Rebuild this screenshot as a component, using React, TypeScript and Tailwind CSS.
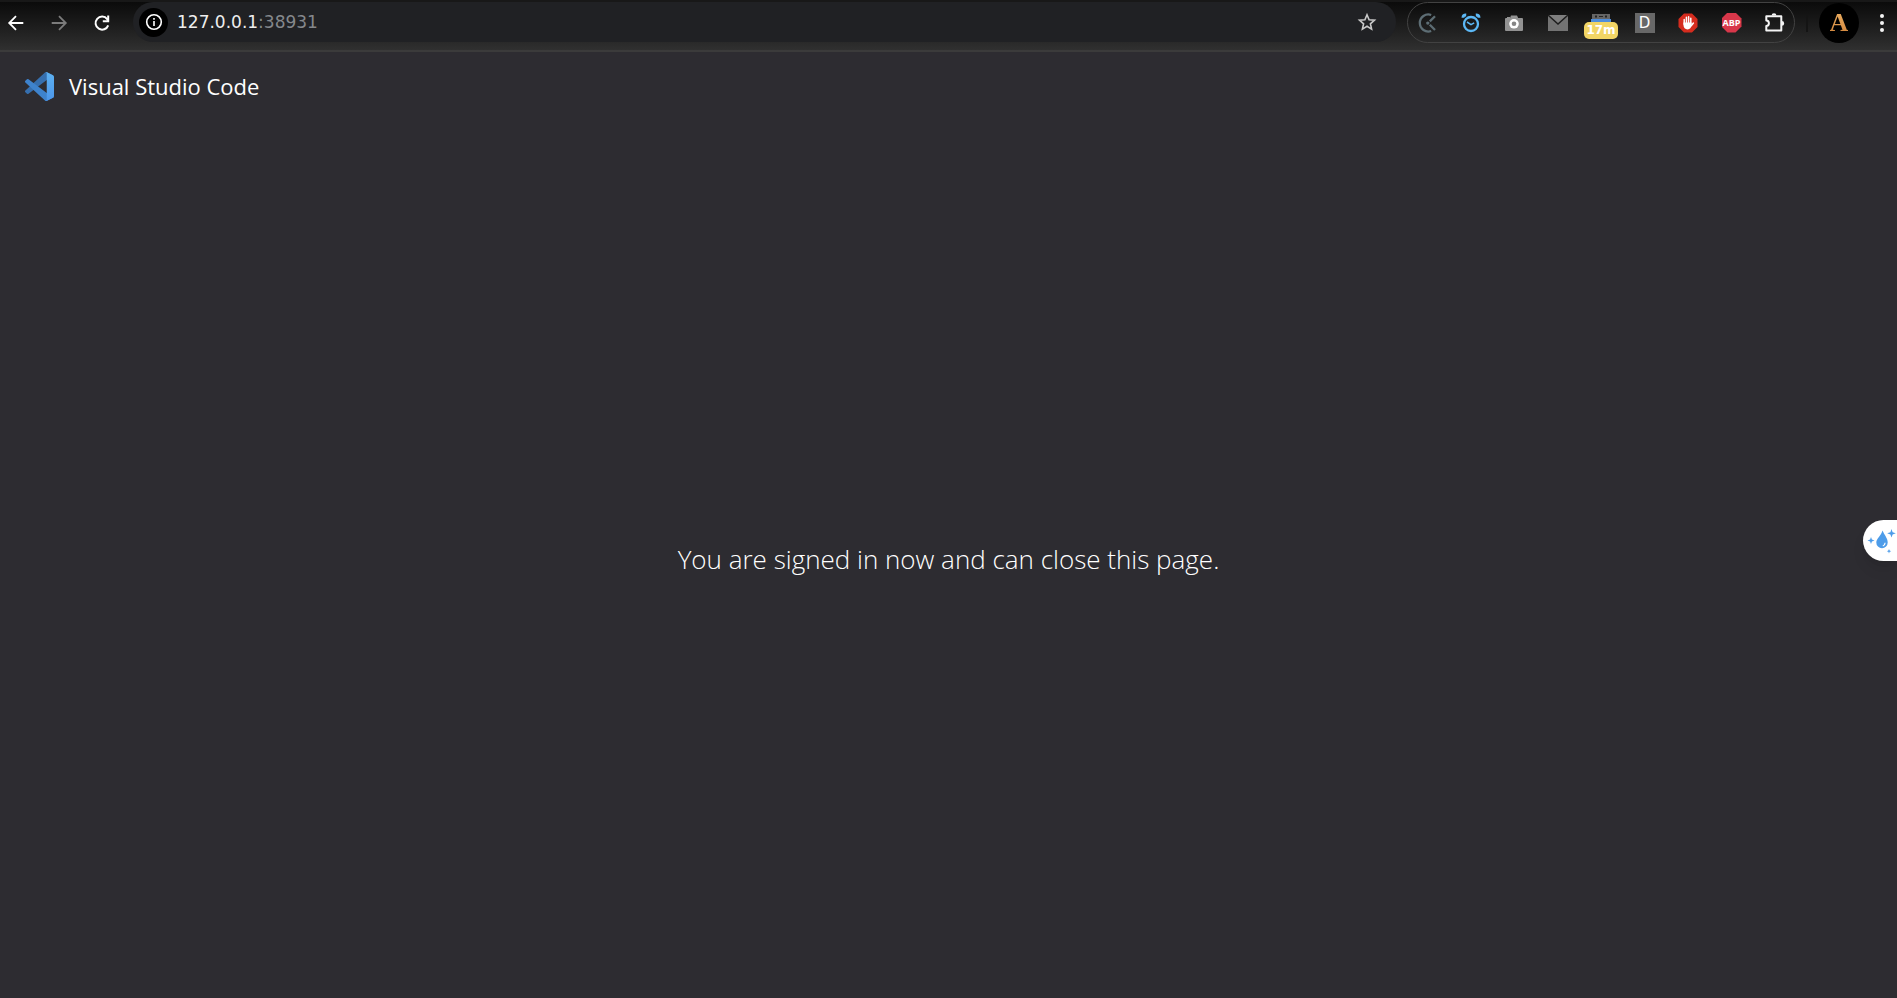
import React from "react";

type ToolButtonProps = {
  label: string;
  className?: string;
  children: React.ReactNode;
};

function ToolButton({ label, className = "justify-center", children }: ToolButtonProps) {
  return (
    <button
      type="button"
      aria-label={label}
      className={`flex shrink-0 items-center ${className}`}
    >
      {children}
    </button>
  );
}

function BackIcon() {
  return (
    <svg width="20" height="20" viewBox="0 0 20 20" fill="none" stroke="currentColor" strokeWidth="1.8">
      <path d="M17.3 10H3.5M10 3.2 3.2 10l6.8 6.8" />
    </svg>
  );
}

function ForwardIcon() {
  return (
    <svg width="20" height="20" viewBox="0 0 20 20" fill="none" stroke="currentColor" strokeWidth="1.8">
      <path d="M2.7 10h13.8M10 3.2l6.8 6.8-6.8 6.8" />
    </svg>
  );
}

function ReloadIcon() {
  return (
    <svg width="20" height="20" viewBox="0 0 20 20" fill="none" stroke="currentColor" strokeWidth="2">
      <path d="M16.2 12.3A6.5 6.5 0 1 1 15.2 6.1L16.4 8" />
      <path d="M16.2 2.6V8.2H10.8" />
    </svg>
  );
}

function InfoIcon() {
  return (
    <svg width="18" height="18" viewBox="0 0 18 18" fill="none" stroke="currentColor" strokeWidth="1.6">
      <circle cx="9" cy="9" r="7.3" />
      <path d="M9 8v5M9 5v1.8" />
    </svg>
  );
}

function StarIcon() {
  return (
    <svg width="20" height="20" viewBox="0 0 20 20" fill="none" stroke="currentColor" strokeWidth="1.6">
      <path d="m10 2.7 2.1 5 5.4.5-4.1 3.6 1.2 5.3-4.6-2.8-4.6 2.8 1.2-5.3-4.1-3.6 5.4-.5z" />
    </svg>
  );
}

function ClickUpIcon() {
  return (
    <svg width="20" height="20" viewBox="0 0 20 20" fill="none" stroke="#5d6d74" strokeWidth="2.3">
      <path d="M14.2 2A8.5 8.5 0 1 0 14.2 18" />
      <path d="m18 3.2-5.2 5.2M12.800 11.800l5.200 5.200" />
      <circle cx="10.8" cy="10.1" r="1.7" fill="#5d6d74" stroke="none" />
    </svg>
  );
}

function AlarmIcon() {
  return (
    <svg width="20" height="20" viewBox="0 0 20 20" fill="none" stroke="#5cb8f6">
      <circle cx="10" cy="11" r="7" strokeWidth="2.3" />
      <path d="m6 9 4 2.6 3.2-1.8" strokeWidth="1.5" />
      <path d="M1.9 4.8C2 2.900 3.200 1.900 5.200 2M18.100 4.800C18 2.900 16.800 1.900 14.800 2" strokeWidth="2.8" />
    </svg>
  );
}

function CameraIcon() {
  return (
    <svg width="20" height="20" viewBox="0 0 20 20" fill="#929292">
      <path d="M2 5h1V4h3v1l1-2.500h6L14.2 5H18a1 1 0 0 1 1 1v11a1 1 0 0 1-1 1H2a1 1 0 0 1-1-1V6a1 1 0 0 1 1-1z" />
      <circle cx="10" cy="10.8" r="4.8" fill="#fff" />
      <circle cx="10" cy="10.8" r="2.3" fill="#858585" />
    </svg>
  );
}

function MailIcon() {
  return (
    <svg width="20" height="18" viewBox="0 0 20 18">
      <path d="M0 1h20v16H0z" fill="#737373" />
      <path d="m0 1 10 9 10-9" fill="#7f7f7f" stroke="#1e1e1e" strokeWidth="1.5" />
    </svg>
  );
}

function RobotIcon() {
  return (
    <svg className="shrink-0" width="20" height="9" viewBox="0 0 20 9">
      <path d="M1 1h18v6H1z" fill="#666" />
      <path d="M4 2.500h2v2H4zM14 2.500h2v2h-2zM8 3h4v1H8z" fill="#252525" />
      <path d="M0 6h20v3H0z" fill="#4f8edb" />
    </svg>
  );
}

function HandIcon() {
  return (
    <svg width="20" height="20" viewBox="0 0 20 20">
      <path d="M6 .5h8L19.5 6v8L14 19.5H6L.5 14V6z" fill="#d52c1e" />
      <path
        d="M6.200 11.200V6.400M8.400 10V4.300M10.600 10V3.800M12.800 10.500V5.200M13.200 12.800l2.200-2.800"
        stroke="#fff"
        strokeWidth="1.5"
        strokeLinecap="round"
      />
      <path d="M5.450 9.500h8.100v3.100c-.4 2.300-1.600 3.800-4 3.800s-4.100-1.600-4.100-4.300z" fill="#fff" />
    </svg>
  );
}

function PuzzleIcon() {
  return (
    <svg width="22" height="22" viewBox="0 0 22 22" fill="none" stroke="#f4f4f4" strokeWidth="2" strokeLinejoin="round">
      <path d="M2.3 4.2h15v14.200h-15v-4.4c3.500-.2 3.500-5.2 0-5.4z" />
      <path d="M7.6 3.600a2.4 2.4 0 0 1 4.8 0zM17.8 9a2.4 2.4 0 0 1 0 4.8z" fill="#f4f4f4" stroke="none" />
    </svg>
  );
}

function DotsIcon() {
  return (
    <svg width="6" height="20" viewBox="0 0 6 20" fill="#f4f4f4">
      <circle cx="3" cy="3" r="2" />
      <circle cx="3" cy="10" r="2" />
      <circle cx="3" cy="17" r="2" />
    </svg>
  );
}

function VSCodeLogo() {
  return (
    <svg width="29" height="29" viewBox="0 0 100 100" aria-hidden="true">
      <defs>
        <linearGradient id="blade" x1="0" y1="0" x2="0" y2="1">
          <stop offset="0" stopColor="#5db1f0" />
          <stop offset="1" stopColor="#4c96ea" />
        </linearGradient>
      </defs>
      <path
        d="M96.5 10.8 75.9.9a6.2 6.2 0 0 0-7.1 1.2L1.3 63.6a4.2 4.2 0 0 0 0 6.2l5.5 5a4.2 4.2 0 0 0 5.4.2L93.3 13.4c2.7-2.1 6.6-.1 6.6 3.3v-.2a6.3 6.3 0 0 0-3.4-5.7z"
        fill="#366fae"
      />
      <path
        d="m96.5 89.2-20.6 9.9a6.2 6.2 0 0 1-7.1-1.2L1.3 36.4a4.2 4.2 0 0 1 0-6.2l5.5-5a4.2 4.2 0 0 1 5.4-.2l81.1 61.6c2.7 2.1 6.6.1 6.6-3.3v.2a6.3 6.3 0 0 1-3.4 5.7z"
        fill="#3e83cd"
      />
      <path
        d="M75.9 99.1a6.2 6.2 0 0 1-7.1-1.2c2.3 2.3 6.2.7 6.2-2.6V4.7c0-3.3-3.9-4.9-6.2-2.6A6.2 6.2 0 0 1 75.9.9l20.6 9.9a6.3 6.3 0 0 1 3.5 5.6v67.2a6.3 6.3 0 0 1-3.5 5.6z"
        fill="url(#blade)"
      />
    </svg>
  );
}

function DropIcon() {
  return (
    <svg width="30" height="26" viewBox="0 0 30 26" fill="#4d9ce9">
      <path d="M15.500 2.500c1.800 4.500 5.200 7.500 5.200 12a5.700 5.700 0 0 1-11.400 0C9.300 10.500 14.300 7.500 15.500 2.500z" />
      <path d="M15.800 18a3.500 3.500 0 0 0 2.300-3.200" fill="none" stroke="#fff" strokeWidth="1.2" />
      <path d="m4 9 .9 2.600 2.600.9-2.600.9L4 16l-.9-2.600-2.600-.9 2.600-.9zM24.500 1l1.100 3.200 3.200 1.100-3.200 1.100-1.100 3.200-1.100-3.200-3.200-1.100 3.200-1.100zM22 21l.6 1.600 1.600.6-1.600.6-.6 1.600-.6-1.600-1.600-.6 1.600-.6z" />
    </svg>
  );
}

function Extensions() {
  return (
    <div className="flex h-[41px] w-[388px] shrink-0 items-center justify-between rounded-full border border-[#424242] px-2">
      <ToolButton label="ClickUp" className="w-[22px] justify-center"><ClickUpIcon /></ToolButton>
      <ToolButton label="Alarm" className="w-[22px] justify-center"><AlarmIcon /></ToolButton>
      <ToolButton label="Screenshot" className="w-[22px] justify-center"><CameraIcon /></ToolButton>
      <ToolButton label="Mail" className="w-[22px] justify-center"><MailIcon /></ToolButton>
      <ToolButton label="Timer" className="h-5 w-[22px] flex-col justify-start">
        <RobotIcon />
        <span className="flex h-[17px] w-[34px] shrink-0 items-center justify-center rounded-[5px] bg-[#f2d565] text-[12px] leading-4 font-bold text-white">
          17m
        </span>
      </ToolButton>
      <ToolButton label="Dictionary" className="w-[22px] justify-center">
        <span className="flex size-5 items-center justify-center bg-[#686868] text-[15px] leading-5 text-white">D</span>
      </ToolButton>
      <ToolButton label="AdBlock" className="w-[22px] justify-center"><HandIcon /></ToolButton>
      <ToolButton label="Adblock Plus" className="w-[22px] justify-center">
        <span className="flex size-5 items-center justify-center bg-[#d8374a] font-['Open_Sans',sans-serif] text-[9px] leading-5 font-bold text-white [clip-path:polygon(30%_0,70%_0,100%_30%,100%_70%,70%_100%,30%_100%,0_70%,0_30%)]">
          ABP
        </span>
      </ToolButton>
      <ToolButton label="Extensions" className="w-[22px] justify-center"><PuzzleIcon /></ToolButton>
    </div>
  );
}

function Toolbar() {
  return (
    <header className="flex items-start border-t-2 border-b-2 border-t-[#181818] border-b-[#3b3b3b] bg-linear-to-b from-[#0b0b0b] to-[#303030] pb-[7px] font-['DejaVu_Sans',sans-serif]">
      <nav aria-label="Navigation" className="flex h-[41px] shrink-0 items-center gap-[23px] pr-[21px] pl-[6px]">
        <ToolButton label="Back" className="justify-center text-white"><BackIcon /></ToolButton>
        <ToolButton label="Forward" className="justify-center text-[#7b7b7b]"><ForwardIcon /></ToolButton>
        <ToolButton label="Reload" className="justify-center text-white"><ReloadIcon /></ToolButton>
      </nav>
      <div className="flex h-10 min-w-0 grow items-center rounded-full bg-[#202124] pr-[19px] pl-[6px]">
        <ToolButton label="Site information" className="size-[29px] justify-center rounded-full bg-black text-white">
          <InfoIcon />
        </ToolButton>
        <a href="#" aria-label="Address" className="ml-[9px] grow text-[17px] leading-5 text-[#eeeeee]">
          127.0.0.1<span className="text-[#85888c]">:38931</span>
        </a>
        <ToolButton label="Bookmark this page" className="justify-center text-[#c8c8c8]"><StarIcon /></ToolButton>
      </div>
      <div className="flex shrink-0 items-center pr-3 pl-[11px]">
        <Extensions />
        <span className="ml-[11px] h-[18px] w-[2px] bg-[#141414]" />
        <ToolButton label="Profile" className="ml-[11px] size-10 justify-center rounded-full bg-black font-['Liberation_Serif',serif] text-[26px] leading-8 font-bold">
          <span className="bg-linear-to-b from-[#efb668] to-[#cc7d34] bg-clip-text text-transparent">A</span>
        </ToolButton>
        <ToolButton label="Menu" className="ml-5 justify-center"><DotsIcon /></ToolButton>
      </div>
    </header>
  );
}

export default function App() {
  return (
    <div className="relative flex min-h-screen flex-col bg-[#2d2c31] text-white">
      <Toolbar />
      <div className="flex h-[68px] items-center gap-[15px] pl-[25px] font-['Open_Sans','Noto_Sans',sans-serif]">
        <VSCodeLogo />
        <h1 className="text-[22px] leading-8">Visual Studio Code</h1>
      </div>
      <main className="flex grow items-center justify-center font-['Open_Sans','Noto_Sans',sans-serif]">
        <p className="text-[26px] leading-9 font-[350]">You are signed in now and can close this page.</p>
      </main>
      <button
        type="button"
        aria-label="Assistant"
        className="absolute top-[520px] right-0 flex h-[41px] w-[34px] items-center justify-end rounded-l-full bg-white shadow-lg"
      >
        <DropIcon />
      </button>
    </div>
  );
}
